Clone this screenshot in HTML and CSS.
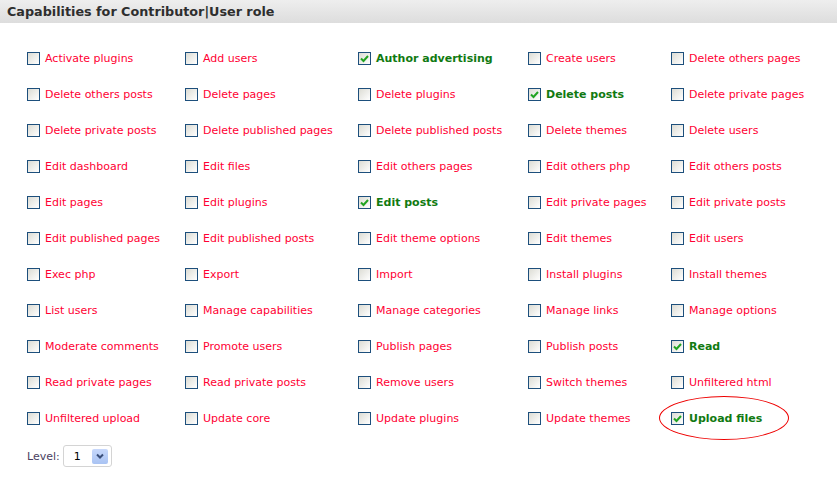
FILE: index.html
```html
<!DOCTYPE html>
<html>
<head>
<meta charset="utf-8">
<link rel="stylesheet" href="styles.css">
</head>
<body>
<div class="header"><h2 class="title">Capabilities for Contributor|User role</h2></div>
<div class="caps">
  <label class="cap"><span class="cb"></span><span class="lbl">Activate plugins</span></label>
  <label class="cap"><span class="cb"></span><span class="lbl">Add users</span></label>
  <label class="cap on"><span class="cb"><svg viewBox="0 0 11 11"><path d="M2 5.5 L4.5 8 L9 3"/></svg></span><span class="lbl">Author advertising</span></label>
  <label class="cap"><span class="cb"></span><span class="lbl">Create users</span></label>
  <label class="cap"><span class="cb"></span><span class="lbl">Delete others pages</span></label>

  <label class="cap"><span class="cb"></span><span class="lbl">Delete others posts</span></label>
  <label class="cap"><span class="cb"></span><span class="lbl">Delete pages</span></label>
  <label class="cap"><span class="cb"></span><span class="lbl">Delete plugins</span></label>
  <label class="cap on"><span class="cb"><svg viewBox="0 0 11 11"><path d="M2 5.5 L4.5 8 L9 3"/></svg></span><span class="lbl">Delete posts</span></label>
  <label class="cap"><span class="cb"></span><span class="lbl">Delete private pages</span></label>

  <label class="cap"><span class="cb"></span><span class="lbl">Delete private posts</span></label>
  <label class="cap"><span class="cb"></span><span class="lbl">Delete published pages</span></label>
  <label class="cap"><span class="cb"></span><span class="lbl">Delete published posts</span></label>
  <label class="cap"><span class="cb"></span><span class="lbl">Delete themes</span></label>
  <label class="cap"><span class="cb"></span><span class="lbl">Delete users</span></label>

  <label class="cap"><span class="cb"></span><span class="lbl">Edit dashboard</span></label>
  <label class="cap"><span class="cb"></span><span class="lbl">Edit files</span></label>
  <label class="cap"><span class="cb"></span><span class="lbl">Edit others pages</span></label>
  <label class="cap"><span class="cb"></span><span class="lbl">Edit others php</span></label>
  <label class="cap"><span class="cb"></span><span class="lbl">Edit others posts</span></label>

  <label class="cap"><span class="cb"></span><span class="lbl">Edit pages</span></label>
  <label class="cap"><span class="cb"></span><span class="lbl">Edit plugins</span></label>
  <label class="cap on"><span class="cb"><svg viewBox="0 0 11 11"><path d="M2 5.5 L4.5 8 L9 3"/></svg></span><span class="lbl">Edit posts</span></label>
  <label class="cap"><span class="cb"></span><span class="lbl">Edit private pages</span></label>
  <label class="cap"><span class="cb"></span><span class="lbl">Edit private posts</span></label>

  <label class="cap"><span class="cb"></span><span class="lbl">Edit published pages</span></label>
  <label class="cap"><span class="cb"></span><span class="lbl">Edit published posts</span></label>
  <label class="cap"><span class="cb"></span><span class="lbl">Edit theme options</span></label>
  <label class="cap"><span class="cb"></span><span class="lbl">Edit themes</span></label>
  <label class="cap"><span class="cb"></span><span class="lbl">Edit users</span></label>

  <label class="cap"><span class="cb"></span><span class="lbl">Exec php</span></label>
  <label class="cap"><span class="cb"></span><span class="lbl">Export</span></label>
  <label class="cap"><span class="cb"></span><span class="lbl">Import</span></label>
  <label class="cap"><span class="cb"></span><span class="lbl">Install plugins</span></label>
  <label class="cap"><span class="cb"></span><span class="lbl">Install themes</span></label>

  <label class="cap"><span class="cb"></span><span class="lbl">List users</span></label>
  <label class="cap"><span class="cb"></span><span class="lbl">Manage capabilities</span></label>
  <label class="cap"><span class="cb"></span><span class="lbl">Manage categories</span></label>
  <label class="cap"><span class="cb"></span><span class="lbl">Manage links</span></label>
  <label class="cap"><span class="cb"></span><span class="lbl">Manage options</span></label>

  <label class="cap"><span class="cb"></span><span class="lbl">Moderate comments</span></label>
  <label class="cap"><span class="cb"></span><span class="lbl">Promote users</span></label>
  <label class="cap"><span class="cb"></span><span class="lbl">Publish pages</span></label>
  <label class="cap"><span class="cb"></span><span class="lbl">Publish posts</span></label>
  <label class="cap on"><span class="cb"><svg viewBox="0 0 11 11"><path d="M2 5.5 L4.5 8 L9 3"/></svg></span><span class="lbl">Read</span></label>

  <label class="cap"><span class="cb"></span><span class="lbl">Read private pages</span></label>
  <label class="cap"><span class="cb"></span><span class="lbl">Read private posts</span></label>
  <label class="cap"><span class="cb"></span><span class="lbl">Remove users</span></label>
  <label class="cap"><span class="cb"></span><span class="lbl">Switch themes</span></label>
  <label class="cap"><span class="cb"></span><span class="lbl">Unfiltered html</span></label>

  <label class="cap"><span class="cb"></span><span class="lbl">Unfiltered upload</span></label>
  <label class="cap"><span class="cb"></span><span class="lbl">Update core</span></label>
  <label class="cap"><span class="cb"></span><span class="lbl">Update plugins</span></label>
  <label class="cap"><span class="cb"></span><span class="lbl">Update themes</span></label>
  <label class="cap on"><span class="cb"><svg viewBox="0 0 11 11"><path d="M2 5.5 L4.5 8 L9 3"/></svg></span><span class="lbl">Upload files</span><span class="ring"></span></label>
</div>
<div class="level">
  <span class="level-label">Level:</span>
  <span class="select"><span class="sel-val">1</span><span class="sel-btn"><svg viewBox="0 0 10 10"><path d="M2 3.5 L5 6.5 L8 3.5"/></svg></span></span>
</div>
</body>
</html>
```

FILE: styles.css
```css
html, body {
  margin: 0;
  padding: 0;
  background: #ffffff;
}
body {
  font-family: "DejaVu Sans", Verdana, sans-serif;
  font-size: 11px;
}
.header {
  height: 23px;
  background: linear-gradient(#eeeeee, #dddddd);
  display: flex;
  align-items: center;
  padding-left: 7px;
}
.title {
  margin: 0;
  font-size: 12.75px;
  font-weight: bold;
  color: #2e2e2e;
}
.caps {
  display: grid;
  grid-template-columns: 158px 173px 170px 143px 1fr;
  grid-auto-rows: 36px;
  padding-left: 27px;
  margin-top: 17px;
}
.cap {
  display: flex;
  align-items: center;
  gap: 5px;
  position: relative;
  color: #ff0033;
}
.cb {
  box-sizing: border-box;
  width: 13px;
  height: 13px;
  border: 1px solid #1d4f7c;
  background: linear-gradient(135deg, #dcdcd4, #ffffff);
  display: flex;
  align-items: center;
  justify-content: center;
  flex: none;
}
.cb svg {
  width: 11px;
  height: 11px;
  fill: none;
  stroke: #21a321;
  stroke-width: 2;
}
.cap.on .lbl {
  color: #117a11;
  font-weight: bold;
}
.ring {
  position: absolute;
  left: -12px;
  top: -4px;
  width: 128px;
  height: 42px;
  border: 1.5px solid #ee0000;
  border-radius: 50%;
}
.level {
  display: flex;
  align-items: center;
  gap: 3px;
  padding-left: 27px;
  margin-top: 9px;
  height: 22px;
}
.level-label {
  color: #4b3f5f;
}
.select {
  box-sizing: border-box;
  width: 49px;
  height: 22px;
  border: 1px solid #d4d4d4;
  border-radius: 3px;
  display: flex;
  align-items: center;
  justify-content: space-between;
  padding: 0 3px 0 10px;
  color: #000000;
}
.sel-btn {
  width: 16px;
  height: 15px;
  background: linear-gradient(#c7d8fb, #a9c3f3);
  border-radius: 2px;
  display: flex;
  align-items: center;
  justify-content: center;
}
.sel-btn svg {
  width: 10px;
  height: 10px;
  fill: none;
  stroke: #3a4f7a;
  stroke-width: 2;
}
```
